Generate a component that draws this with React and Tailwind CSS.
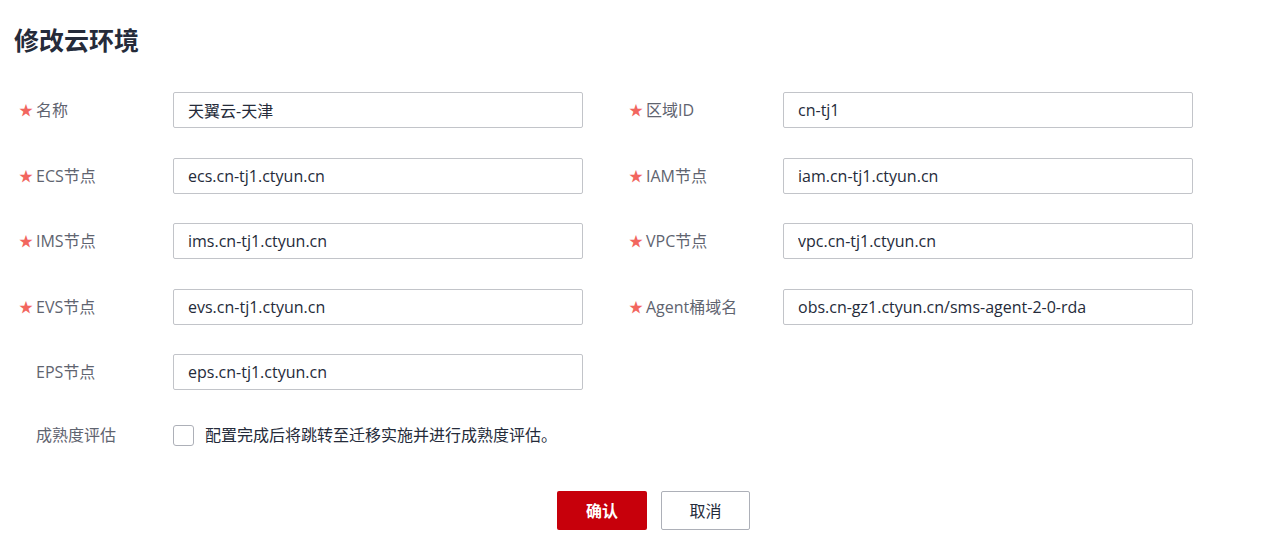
import React, { useState } from 'react';

const FONT = { fontFamily: '"Open Sans", "Noto Sans CJK SC", sans-serif' };

const left = [
  { label: '名称', value: '天翼云-天津', required: true },
  { label: 'ECS节点', value: 'ecs.cn-tj1.ctyun.cn', required: true },
  { label: 'IMS节点', value: 'ims.cn-tj1.ctyun.cn', required: true },
  { label: 'EVS节点', value: 'evs.cn-tj1.ctyun.cn', required: true },
  { label: 'EPS节点', value: 'eps.cn-tj1.ctyun.cn', required: false },
];

const right = [
  { label: '区域ID', value: 'cn-tj1', required: true },
  { label: 'IAM节点', value: 'iam.cn-tj1.ctyun.cn', required: true },
  { label: 'VPC节点', value: 'vpc.cn-tj1.ctyun.cn', required: true },
  { label: 'Agent桶域名', value: 'obs.cn-gz1.ctyun.cn/sms-agent-2-0-rda', required: true },
];

function Field({ label, value, required }) {
  return (
    <div className="flex items-center h-9">
      <div className="w-[154px] flex items-center text-base text-[#5f6470]">
        <span className="w-[17px] text-[#f2665f] text-sm leading-none">{required ? '★' : ''}</span>
        <span>{label}</span>
      </div>
      <input
        defaultValue={value}
        className="w-[410px] h-9 border border-[#c2c4c9] rounded-[2px] px-[14px] text-base text-[#252b3a] outline-none"
        style={FONT}
      />
    </div>
  );
}

export default function App() {
  const [checked, setChecked] = useState(false);

  return (
    <div className="w-[1280px] h-[550px] bg-white" style={FONT}>
      <h1 className="pl-[14px] pt-[23px] text-[25px] leading-[34px] font-bold text-[#252b3a]">修改云环境</h1>

      <div className="pl-[19px] pt-[35px] flex gap-[46px]">
        <div className="flex flex-col gap-[29.5px]">
          {left.map((f) => (
            <Field key={f.label} {...f} />
          ))}
        </div>
        <div className="flex flex-col gap-[29.5px]">
          {right.map((f) => (
            <Field key={f.label} {...f} />
          ))}
        </div>
      </div>

      <div className="pl-[19px] mt-[35px] flex items-center h-5">
        <div className="w-[154px] pl-[17px] text-base text-[#5f6470]">成熟度评估</div>
        <button
          onClick={() => setChecked(!checked)}
          className="w-[21px] h-[21px] border border-[#adb0b8] rounded-[3px] bg-white"
        />
        <span className="ml-[11px] text-base text-[#252b3a]">配置完成后将跳转至迁移实施并进行成熟度评估。</span>
      </div>

      <div className="mt-[46px] flex pl-[557px] gap-[14px]">
        <button className="w-[90px] h-[39px] bg-[#c7000b] text-white text-base font-bold rounded-[2px]">确认</button>
        <button className="w-[89px] h-[39px] bg-white border border-[#adb0b8] text-[#252b3a] text-base rounded-[2px]">取消</button>
      </div>
    </div>
  );
}
